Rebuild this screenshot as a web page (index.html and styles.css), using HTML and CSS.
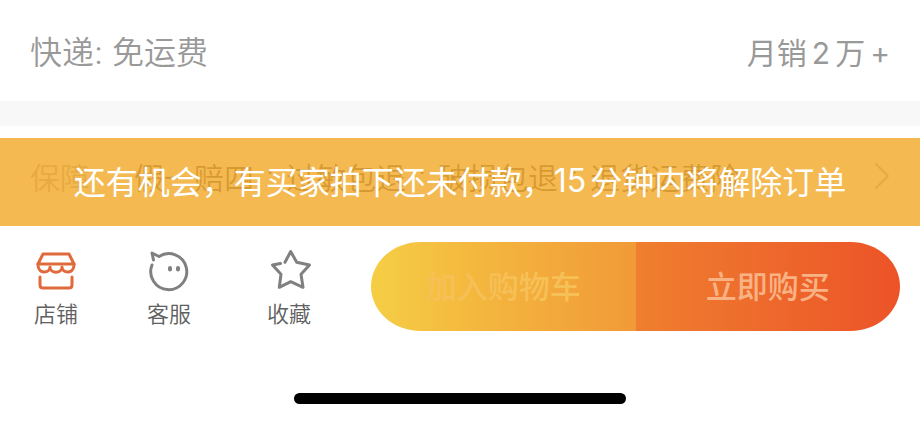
FILE: index.html
```html
<!DOCTYPE html>
<html lang="zh-CN">
<head>
  <meta charset="UTF-8">
  <meta name="viewport" content="width=device-width, initial-scale=1.0">
  <title>商品详情</title>
  <link rel="stylesheet" href="styles.css">
</head>
<body>
  <div class="shipping">
    <span>快递: 免运费</span>
    <span class="sales"><span>月销</span><span>2</span><span>万</span><span>+</span></span>
  </div>

  <div class="service">
    <a class="guarantee" href="#">
      <span class="guarantee-label">保障</span>
      <span class="guarantee-list">
        <span>假一赔四</span><i>·</i><span>过敏包退</span><i>·</i><span>破损包退</span><i>·</i><span>退货运费险</span>
      </span>
      <svg class="arrow" viewBox="0 0 16 26"><path d="M2 1l12 12L2 25"/></svg>
    </a>
    <!-- Aviso sobre a linha de garantias -->
    <div class="notice" role="status">还有机会，有买家拍下还未付款，<span class="num">15</span>分钟内将解除订单</div>
  </div>

  <div class="bar">
    <nav class="links">
      <a href="#">
        <svg class="icon shop" viewBox="0 0 40 40">
          <path d="M7 4h26l5 10H2L7 4z"/>
          <path d="M2 14v1c0 9 12 9 12 2c0 7 12 7 12 0c0 7 12 7 12-2v-1"/>
          <path d="M4 27v8q0 3 3 3h26q3 0 3-3v-8"/>
        </svg>
        <span>店铺</span>
      </a>
      <a href="#">
        <svg class="icon" viewBox="0 0 40 40">
          <path d="M4.5 10L3 3l7 3.5A18 18 0 1 1 3 15"/>
          <path class="eye" d="M21 18v1.5M29 18v1.5"/>
        </svg>
        <span>客服</span>
      </a>
      <a href="#">
        <svg class="icon" viewBox="0 0 40 40">
          <path d="M11.5 13.5L3.5 15L12 24.3L10.3 37.3L21.7 31.7L34 37.3L32 24.3L40.5 15L27.7 12.3L21.7 1.5L16 12.3"/>
        </svg>
        <span>收藏</span>
      </a>
    </nav>
    <div class="buttons">
      <button type="button" class="cart">加入购物车</button>
      <button type="button" class="buy">立即购买</button>
    </div>
  </div>

  <div class="home"></div>
</body>
</html>
```

FILE: styles.css
```css
* {
  box-sizing: border-box;
}
body {
  margin: 0;
  background: #fff;
  color: #999;
  font-family: Inter, "Noto Sans CJK SC", sans-serif;
  font-weight: 350;
}
a {
  color: inherit;
  text-decoration: none;
}
svg {
  overflow: visible;
  fill: none;
  stroke: currentColor;
  stroke-linecap: round;
  stroke-linejoin: round;
}
.shipping {
  display: flex;
  justify-content: space-between;
  padding: 29px 30px 24px;
  border-bottom: 25px solid #f8f8f8;
  font-size: 32px;
  line-height: 48px;
}
.sales {
  display: flex;
  gap: 5px;
  font-size: 30px;
  font-weight: 400;
}
.service {
  position: relative;
}
.guarantee {
  display: flex;
  align-items: center;
  height: 100px;
  padding: 0 30px;
  font-size: 30px;
}
.guarantee-label {
  margin-right: 44px;
}
.guarantee-list {
  display: flex;
  color: #333;
}
.guarantee-list i {
  width: 32px;
  font-style: normal;
  text-align: center;
}
.arrow {
  width: 16px;
  height: 26px;
  margin-left: auto;
  stroke-width: 2;
}
/* faixa translúcida por cima das garantias */
.notice {
  position: absolute;
  inset: 12px 0 0;
  display: flex;
  align-items: center;
  justify-content: center;
  padding-bottom: 4px;
  background: rgba(243, 173, 50, 0.85);
  color: #fff;
  font-size: 32px;
  font-weight: 400;
  white-space: nowrap;
}
.num {
  margin-right: 4px;
}
.bar {
  display: flex;
  padding: 16px 20px 0 0;
}
.links {
  display: grid;
  grid-template-columns: 112px 114px 126px;
  flex: 0 0 371px;
}
.links a {
  display: flex;
  flex-direction: column;
  align-items: center;
  gap: 8px;
  padding-top: 8px;
  color: #606060;
  font-size: 22px;
  line-height: 32px;
}
.icon {
  width: 40px;
  height: 40px;
  color: #808080;
  stroke-width: 3;
}
.links .shop {
  color: #e06a3b;
}
.eye {
  stroke-width: 4;
}
.buttons {
  display: flex;
  flex: 1;
  height: 89px;
  border-radius: 50px / 45px;
  overflow: hidden;
}
button {
  flex: 1;
  padding: 0 0 4px;
  border: none;
  font-family: inherit;
  font-size: 31px;
  font-weight: 500;
  cursor: pointer;
}
.cart {
  background: linear-gradient(to right, #f5ce45, #f4b73e 40%, #f19a38);
  color: #f6c057;
}
.buy {
  background: linear-gradient(to right, #ef7f2f, #ec5328);
  color: #f9b284;
}
.home {
  width: 36%;
  height: 11px;
  margin: 62px auto 0;
  border-radius: 6px;
  background: #000;
}
```
